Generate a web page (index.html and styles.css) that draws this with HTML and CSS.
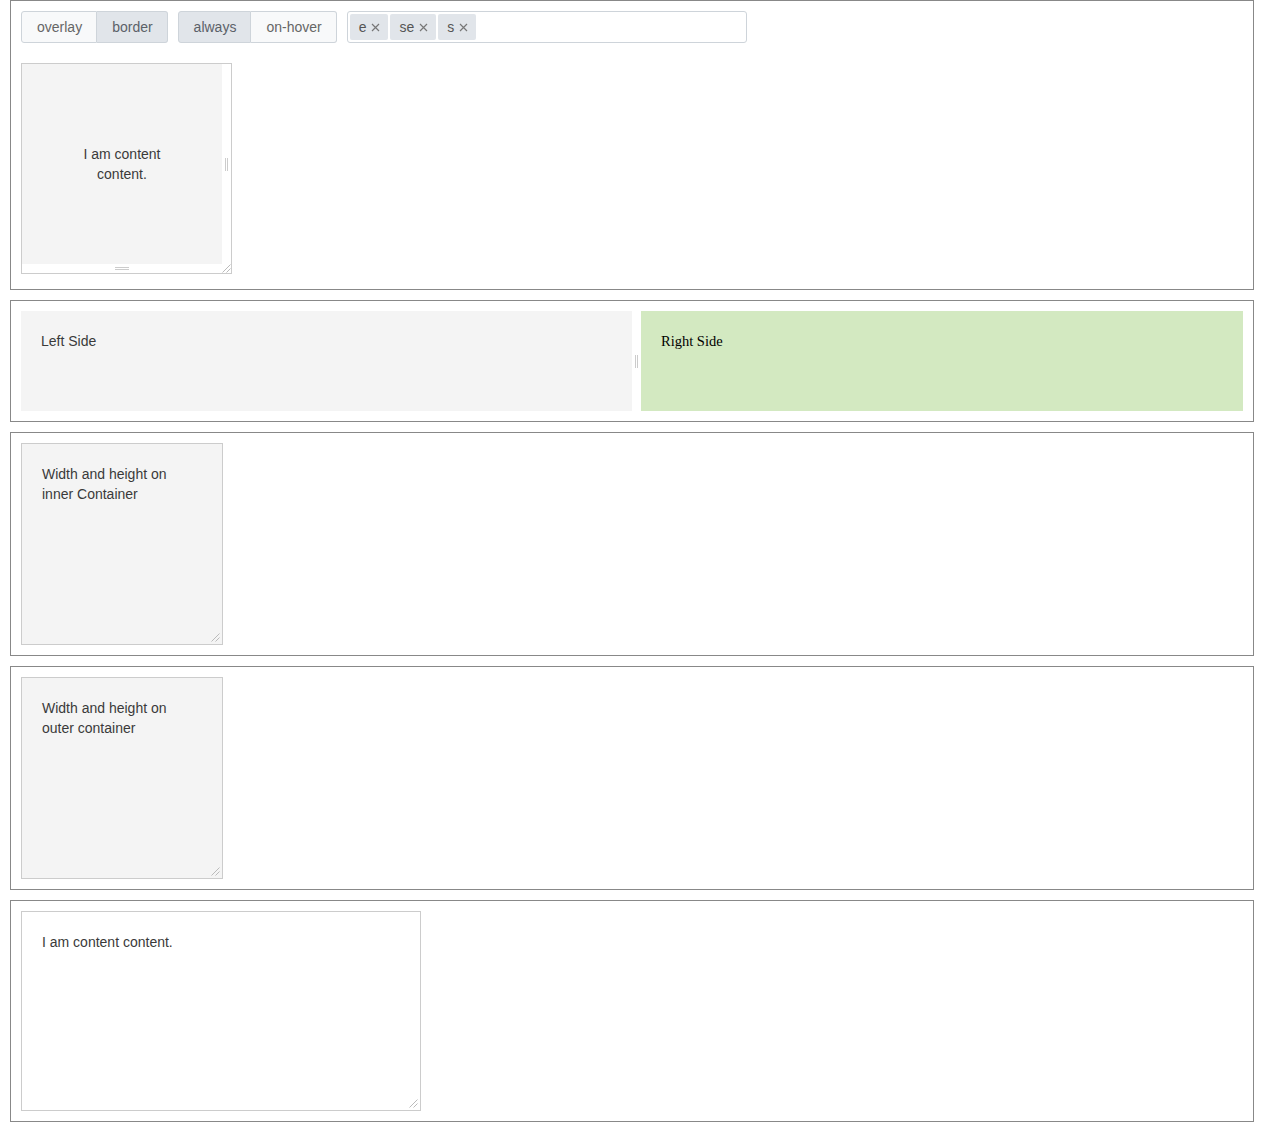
FILE: index.html
```html
<!DOCTYPE html>
<html>
<head>
<meta charset="utf-8">
<link rel="stylesheet" href="styles.css">
</head>
<body>
<section class="demo demo-first">
  <div class="toolbar">
    <div class="btn-group">
      <button class="btn">overlay</button>
      <button class="btn active">border</button>
    </div>
    <div class="btn-group">
      <button class="btn active">always</button>
      <button class="btn">on-hover</button>
    </div>
    <div class="tag-input">
      <span class="tag">e<svg class="x" viewBox="0 0 9 9"><path d="M1 1L8 8M8 1L1 8"/></svg></span>
      <span class="tag">se<svg class="x" viewBox="0 0 9 9"><path d="M1 1L8 8M8 1L1 8"/></svg></span>
      <span class="tag">s<svg class="x" viewBox="0 0 9 9"><path d="M1 1L8 8M8 1L1 8"/></svg></span>
    </div>
  </div>
  <div class="resizable">
    <div class="rz-content"><p>I am content content.</p></div>
    <div class="rz-handle-e"><span></span></div>
    <div class="rz-handle-s"><span></span></div>
    <div class="rz-corner"><svg viewBox="0 0 9 9"><path d="M0.5 8.5L8.5 0.5M4.5 8.5L8.5 4.5"/></svg></div>
  </div>
</section>

<section class="demo">
  <div class="split">
    <div class="pane-left">Left Side</div>
    <div class="split-handle"><span></span></div>
    <div class="pane-right">Right Side</div>
  </div>
</section>

<section class="demo">
  <div class="box gray">
    <p>Width and height on<br>inner Container</p>
    <svg class="grip" viewBox="0 0 9 9"><path d="M0.5 8.5L8.5 0.5M4.5 8.5L8.5 4.5"/></svg>
  </div>
</section>

<section class="demo">
  <div class="box gray">
    <p>Width and height on<br>outer container</p>
    <svg class="grip" viewBox="0 0 9 9"><path d="M0.5 8.5L8.5 0.5M4.5 8.5L8.5 4.5"/></svg>
  </div>
</section>

<section class="demo">
  <div class="box wide">
    <p>I am content content.</p>
    <svg class="grip" viewBox="0 0 9 9"><path d="M0.5 8.5L8.5 0.5M4.5 8.5L8.5 4.5"/></svg>
  </div>
</section>
</body>
</html>
```

FILE: styles.css
```css
* { box-sizing: border-box; }
html, body { margin: 0; padding: 0; background: #fff; }
body {
  font-family: "Liberation Sans", Arial, sans-serif;
  font-size: 14px;
  line-height: 20px;
  color: #3a3a3a;
}
p { margin: 0; }

.demo {
  margin: 0 10px 10px;
  border: 1px solid #888;
  padding: 10px;
}
.demo-first { padding-bottom: 15px; }

.toolbar {
  display: flex;
  gap: 10px;
  margin-bottom: 20px;
}
.btn-group { display: flex; }
.btn {
  font-family: "Liberation Sans", Arial, sans-serif;
  font-size: 14px;
  height: 32px;
  padding: 0 14px 0 15px;
  margin: 0;
  border: 1px solid #ced4da;
  background: #f8f9fa;
  color: #666;
  cursor: pointer;
}
.btn + .btn { border-left: none; }
.btn:first-child { border-radius: 3px 0 0 3px; }
.btn:last-child { border-radius: 0 3px 3px 0; }
.btn.active { background: #e1e5ea; color: #5b6168; }

.tag-input {
  width: 400px;
  height: 32px;
  border: 1px solid #ced4da;
  border-radius: 3px;
  padding: 2px;
  display: flex;
  gap: 2px;
  background: #fff;
}
.tag {
  height: 26px;
  background: #e1e5ea;
  border-radius: 2px;
  padding: 0 8px 0 9px;
  display: flex;
  align-items: center;
  gap: 5px;
  color: #555;
}
.x { width: 9px; height: 9px; }
.x path { stroke: #777; stroke-width: 1.2; fill: none; }

.resizable {
  display: grid;
  grid-template-columns: 200px 9px;
  grid-template-rows: 200px 9px;
  width: 211px;
  border: 1px solid #ccc;
  background: #fff;
}
.rz-content {
  background: #f4f4f4;
  display: flex;
  align-items: center;
  justify-content: center;
  text-align: center;
  padding: 0 50px;
}
.rz-handle-e {
  display: flex;
  align-items: center;
  justify-content: center;
}
.rz-handle-e span {
  width: 3px;
  height: 13px;
  border-left: 1px solid #ccc;
  border-right: 1px solid #ccc;
}
.rz-handle-s {
  display: flex;
  align-items: center;
  justify-content: center;
}
.rz-handle-s span {
  width: 14px;
  height: 3px;
  border-top: 1px solid #ccc;
  border-bottom: 1px solid #ccc;
}
.rz-corner svg { display: block; width: 9px; height: 9px; }
.rz-corner path, .grip path { stroke: #bbb; stroke-width: 1; fill: none; }

.split {
  display: flex;
  height: 100px;
}
.pane-left {
  width: 611px;
  background: #f4f4f4;
  padding: 20px;
}
.split-handle {
  width: 9px;
  display: flex;
  align-items: center;
  justify-content: center;
}
.split-handle span {
  width: 3px;
  height: 13px;
  border-left: 1px solid #ccc;
  border-right: 1px solid #ccc;
}
.pane-right {
  flex: 1;
  background: #d3e9c1;
  padding: 20px;
  font-family: "Liberation Serif", "Times New Roman", serif;
  font-size: 14.5px;
  line-height: 20px;
  color: #000;
}

.box {
  position: relative;
  width: 202px;
  height: 202px;
  border: 1px solid #ccc;
  padding: 20px;
}
.box.gray { background: #f4f4f4; }
.box.wide { width: 400px; height: 200px; background: #fff; }
.grip {
  position: absolute;
  right: 2px;
  bottom: 2px;
  width: 9px;
  height: 9px;
}
```
